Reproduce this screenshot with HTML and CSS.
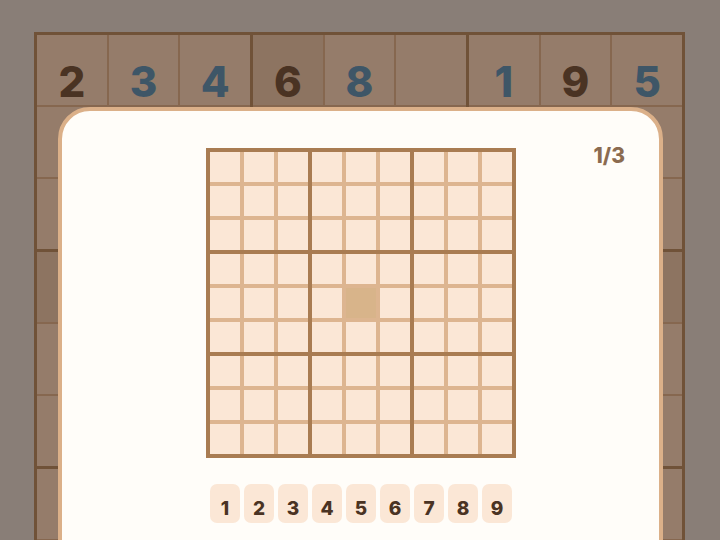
FILE: index.html
```html
<!DOCTYPE html>
<html>
<head>
<meta charset="utf-8">
<link rel="stylesheet" href="styles.css">
</head>
<body>
<div class="page">
  <div class="board">
    <div class="box">
      <div class="cell"><span class="given">2</span></div><div class="cell"><span class="user">3</span></div><div class="cell"><span class="user">4</span></div>
      <div class="cell"></div><div class="cell"></div><div class="cell"></div>
      <div class="cell"></div><div class="cell"></div><div class="cell"></div>
    </div>
    <div class="box">
      <div class="cell hl"><span class="given">6</span></div><div class="cell"><span class="user">8</span></div><div class="cell"></div>
      <div class="cell hl"></div><div class="cell"></div><div class="cell"></div>
      <div class="cell hl"></div><div class="cell"></div><div class="cell"></div>
    </div>
    <div class="box">
      <div class="cell"><span class="user">1</span></div><div class="cell"><span class="given">9</span></div><div class="cell"><span class="user">5</span></div>
      <div class="cell"></div><div class="cell"></div><div class="cell"></div>
      <div class="cell"></div><div class="cell"></div><div class="cell"></div>
    </div>
    <div class="box">
      <div class="cell hl"></div><div class="cell hl"></div><div class="cell hl"></div>
      <div class="cell"></div><div class="cell"></div><div class="cell"></div>
      <div class="cell"></div><div class="cell"></div><div class="cell"></div>
    </div>
    <div class="box">
      <div class="cell hl"></div><div class="cell hl"></div><div class="cell hl"></div>
      <div class="cell hl"></div><div class="cell"></div><div class="cell"></div>
      <div class="cell hl"></div><div class="cell"></div><div class="cell"></div>
    </div>
    <div class="box">
      <div class="cell hl"></div><div class="cell hl"></div><div class="cell hl"></div>
      <div class="cell"></div><div class="cell"></div><div class="cell"></div>
      <div class="cell"></div><div class="cell"></div><div class="cell"></div>
    </div>
    <div class="box">
      <div class="cell"></div><div class="cell"></div><div class="cell"></div>
      <div class="cell"></div><div class="cell"></div><div class="cell"></div>
      <div class="cell"></div><div class="cell"></div><div class="cell"></div>
    </div>
    <div class="box">
      <div class="cell hl"></div><div class="cell"></div><div class="cell"></div>
      <div class="cell hl"></div><div class="cell"></div><div class="cell"></div>
      <div class="cell hl"></div><div class="cell"></div><div class="cell"></div>
    </div>
    <div class="box">
      <div class="cell"></div><div class="cell"></div><div class="cell"></div>
      <div class="cell"></div><div class="cell"></div><div class="cell"></div>
      <div class="cell"></div><div class="cell"></div><div class="cell"></div>
    </div>
  </div>
</div>

<div class="modal">
  <div class="counter">1/3</div>
  <div class="mini">
    <div class="mbox"><div class="mcell"></div><div class="mcell"></div><div class="mcell"></div><div class="mcell"></div><div class="mcell"></div><div class="mcell"></div><div class="mcell"></div><div class="mcell"></div><div class="mcell"></div></div>
    <div class="mbox"><div class="mcell"></div><div class="mcell"></div><div class="mcell"></div><div class="mcell"></div><div class="mcell"></div><div class="mcell"></div><div class="mcell"></div><div class="mcell"></div><div class="mcell"></div></div>
    <div class="mbox"><div class="mcell"></div><div class="mcell"></div><div class="mcell"></div><div class="mcell"></div><div class="mcell"></div><div class="mcell"></div><div class="mcell"></div><div class="mcell"></div><div class="mcell"></div></div>
    <div class="mbox"><div class="mcell"></div><div class="mcell"></div><div class="mcell"></div><div class="mcell"></div><div class="mcell"></div><div class="mcell"></div><div class="mcell"></div><div class="mcell"></div><div class="mcell"></div></div>
    <div class="mbox"><div class="mcell"></div><div class="mcell"></div><div class="mcell"></div><div class="mcell"></div><div class="mcell sel"></div><div class="mcell"></div><div class="mcell"></div><div class="mcell"></div><div class="mcell"></div></div>
    <div class="mbox"><div class="mcell"></div><div class="mcell"></div><div class="mcell"></div><div class="mcell"></div><div class="mcell"></div><div class="mcell"></div><div class="mcell"></div><div class="mcell"></div><div class="mcell"></div></div>
    <div class="mbox"><div class="mcell"></div><div class="mcell"></div><div class="mcell"></div><div class="mcell"></div><div class="mcell"></div><div class="mcell"></div><div class="mcell"></div><div class="mcell"></div><div class="mcell"></div></div>
    <div class="mbox"><div class="mcell"></div><div class="mcell"></div><div class="mcell"></div><div class="mcell"></div><div class="mcell"></div><div class="mcell"></div><div class="mcell"></div><div class="mcell"></div><div class="mcell"></div></div>
    <div class="mbox"><div class="mcell"></div><div class="mcell"></div><div class="mcell"></div><div class="mcell"></div><div class="mcell"></div><div class="mcell"></div><div class="mcell"></div><div class="mcell"></div><div class="mcell"></div></div>
  </div>
  <div class="pad">
    <div class="key">1</div><div class="key">2</div><div class="key">3</div>
    <div class="key">4</div><div class="key">5</div><div class="key">6</div>
    <div class="key">7</div><div class="key">8</div><div class="key">9</div>
  </div>
</div>
</body>
</html>
```

FILE: styles.css
```css
html, body {
  margin: 0;
  padding: 0;
  width: 720px;
  height: 540px;
  overflow: hidden;
  background: #897e77;
  font-family: Inter, "Noto Sans", "Liberation Sans", sans-serif;
}

.page {
  padding: 32px 0 0 34px;
}

.board {
  display: grid;
  grid-template-columns: repeat(3, 213px);
  grid-auto-rows: 214px;
  gap: 3px;
  width: max-content;
  border: 3px solid #705238;
  background: #705238;
}

.box {
  display: grid;
  grid-template-columns: repeat(3, 1fr);
  grid-template-rows: repeat(3, 1fr);
  gap: 2px;
  background: #86674f;
}

.cell {
  background: #957c6a;
  display: flex;
  justify-content: center;
  align-items: center;
  padding-top: 24px;
  box-sizing: border-box;
  font-size: 42px;
  font-weight: 800;
  line-height: 1;
}

.cell.hl {
  background: #8d7461;
}

.given { color: #4a3323; }
.user { color: #3e5667; }

.modal {
  position: absolute;
  left: 58px;
  top: 107px;
  width: 596px;
  height: 480px;
  border: 4px solid #dbb089;
  border-radius: 32px;
  background: #fffdf9;
  display: flex;
  flex-direction: column;
  align-items: center;
  padding-top: 37px;
  padding-left: 1px;
  box-sizing: content-box;
}

.counter {
  position: absolute;
  top: 32px;
  right: 34px;
  font-size: 21px;
  font-weight: 800;
  color: #8b6b50;
}

.mini {
  display: grid;
  grid-template-columns: repeat(3, 98px);
  grid-auto-rows: 98px;
  gap: 4px;
  padding: 4px;
  background: #a97c52;
}

.mbox {
  display: grid;
  grid-template-columns: repeat(3, 30px);
  grid-auto-rows: 30px;
  gap: 4px;
  background: #ddb590;
}

.mcell {
  background: #fbe7d6;
}

.mcell.sel {
  background: #d8b48a;
}

.pad {
  display: flex;
  gap: 4px;
  margin-top: 26px;
}

.key {
  width: 30px;
  height: 39px;
  box-sizing: border-box;
  padding-top: 10px;
  border-radius: 7px;
  background: #fbe7d6;
  color: #4a3323;
  font-size: 19px;
  font-weight: 800;
  display: flex;
  justify-content: center;
  align-items: center;
}
```
